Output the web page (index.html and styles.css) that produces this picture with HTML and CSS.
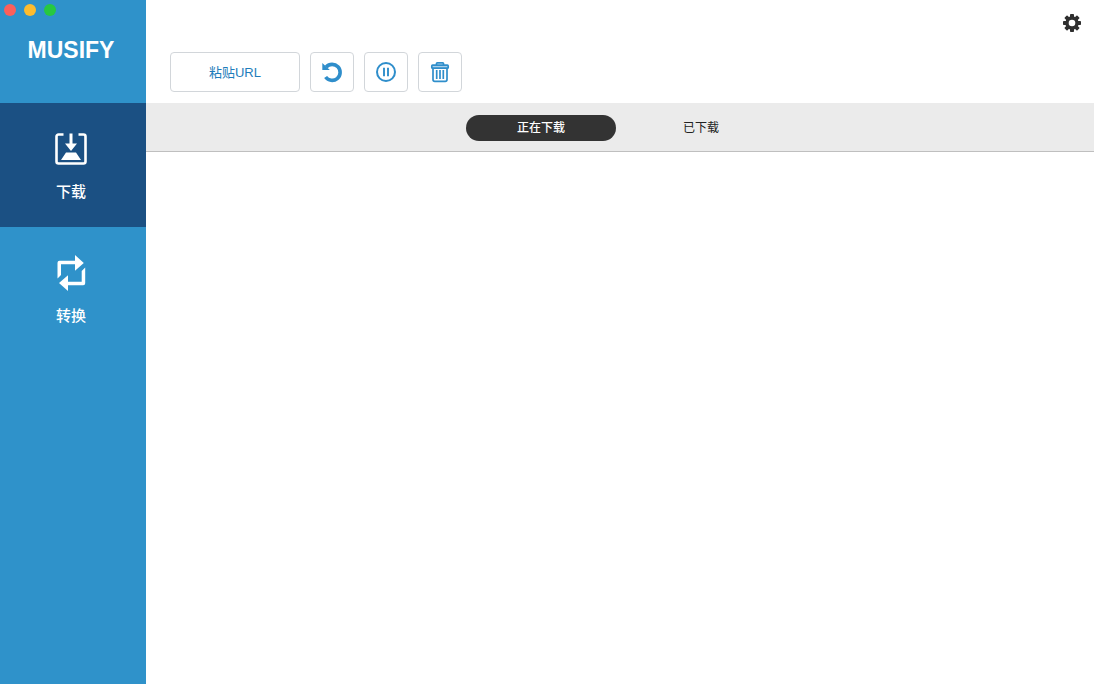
FILE: index.html
```html
<!DOCTYPE html>
<html lang="zh-CN">
<head>
  <meta charset="utf-8">
  <meta name="viewport" content="width=device-width, initial-scale=1">
  <title>MUSIFY</title>
  <link rel="stylesheet" href="styles.css">
</head>
<body>
  <div class="app">
    <aside class="sidebar">
      <header class="brand">
        <div class="window-controls">
          <button class="dot dot-close" type="button" aria-label="关闭"></button>
          <button class="dot dot-minimize" type="button" aria-label="最小化"></button>
          <button class="dot dot-zoom" type="button" aria-label="缩放"></button>
        </div>
        <h1 class="logo">MUSIFY</h1>
      </header>
      <nav class="nav">
        <a class="nav-item nav-item-active" href="#download">
          <svg class="nav-icon" viewBox="0 0 36 36" aria-hidden="true">
            <path d="M10.500 3.500H5.500a2 2 0 0 0-2 2v25a2 2 0 0 0 2 2h25a2 2 0 0 0 2-2v-25a2 2 0 0 0-2-2H25.500" fill="none" stroke="currentColor" stroke-width="2.6"/>
            <path d="M16.500 2.500h3V12.500h4.500l-6 7.500-6-7.500h4.500zM13 21.500h10l5 7.500h-20z" fill="currentColor"/>
          </svg>
          <span>下载</span>
        </a>
        <a class="nav-item" href="#convert">
          <svg class="nav-icon" viewBox="0 0 36 36" aria-hidden="true">
            <path d="M4.500 23.500V7.700q0-2 2-2H22V0l8.800 8-8.800 7.800V9.300H8V20z" fill="currentColor"/>
            <path d="M32.200 12.500v15.800q0 2-2 2H15v5.700L6 28l9-7.800v6.500h13.700V16z" fill="currentColor"/>
          </svg>
          <span>转换</span>
        </a>
      </nav>
    </aside>

    <main class="main">
      <header class="topbar">
        <div class="toolbar">
          <button class="btn btn-paste" type="button">粘贴URL</button>
          <button class="btn btn-icon" type="button" aria-label="重新开始">
            <svg class="tool-icon" viewBox="0 0 22 22" aria-hidden="true">
              <path d="M5.200 6A8 8 0 1 1 4.600 16" fill="none" stroke="currentColor" stroke-width="3.600"/>
              <path d="M1.300 2v7H8.800z" fill="currentColor"/>
            </svg>
          </button>
          <button class="btn btn-icon" type="button" aria-label="暂停">
            <svg class="tool-icon" viewBox="0 0 22 22" aria-hidden="true">
              <circle cx="11" cy="11" r="9" fill="none" stroke="currentColor" stroke-width="2"/>
              <path d="M9 6.800v8.400M13 6.800v8.400" stroke="currentColor" stroke-width="1.900"/>
            </svg>
          </button>
          <button class="btn btn-icon" type="button" aria-label="删除">
            <svg class="tool-icon" viewBox="0 0 22 22" aria-hidden="true">
              <g fill="none" stroke="currentColor" stroke-width="1.700">
                <path d="M7.500 4V2.500q0-.7.700-.7h5.600q.7 0 .7.700V4"/>
                <path d="M4 7v11.500q0 1.800 1.800 1.800h10.400q1.800 0 1.800-1.800V7"/>
                <path d="M7.700 9v9M11 9v9M14.300 9v9"/>
                <rect x="2.800" y="4.200" width="16.400" height="3" rx=".8" fill="#a9cfe9"/>
              </g>
            </svg>
          </button>
        </div>
        <button class="settings" type="button" aria-label="设置">
          <svg class="settings-icon" viewBox="0 0 20 20" aria-hidden="true">
            <g fill="currentColor">
              <rect x="8" y="1" width="4" height="18" rx=".8"/>
              <rect x="8" y="1" width="4" height="18" rx=".8" transform="rotate(45 10 10)"/>
              <rect x="8" y="1" width="4" height="18" rx=".8" transform="rotate(90 10 10)"/>
              <rect x="8" y="1" width="4" height="18" rx=".8" transform="rotate(135 10 10)"/>
              <circle cx="10" cy="10" r="6.700"/>
            </g>
            <circle cx="10" cy="10" r="3.300" fill="#fff"/>
          </svg>
        </button>
      </header>
      <div class="tabs" role="tablist">
        <button class="tab tab-active" type="button" role="tab" aria-selected="true">正在下载</button>
        <button class="tab" type="button" role="tab" aria-selected="false">已下载</button>
      </div>
      <section class="content" aria-label="正在下载"></section>
    </main>
  </div>
</body>
</html>
```
FILE: styles.css
```css
* {
  box-sizing: border-box;
}

body {
  margin: 0;
  font-family: "Liberation Sans", "Noto Sans CJK SC", sans-serif;
  color: #222;
  background: #fff;
}

button {
  font: inherit;
  color: inherit;
  padding: 0;
  border: 0;
  background: none;
  cursor: pointer;
}

svg {
  display: block;
}

.app {
  display: flex;
  min-height: 100vh;
}

.sidebar {
  flex: 0 0 146px;
  background: #2f92ca;
  color: #fff;
}

.brand {
  height: 103px;
  padding-top: 4px;
}

.window-controls {
  display: flex;
  gap: 8px;
  padding-left: 4px;
}

.dot {
  width: 12px;
  height: 12px;
  border-radius: 50%;
}

.dot-close {
  background: #fc605b;
}

.dot-minimize {
  background: #fdbc2e;
}

.dot-zoom {
  background: #27c840;
}

.logo {
  margin: 20px 4px 0 0;
  font-size: 23px;
  line-height: 28px;
  font-weight: 700;
  text-align: center;
}

.nav-item {
  display: flex;
  flex-direction: column;
  align-items: center;
  gap: 13px;
  height: 124px;
  padding: 28px 4px 0 0;
  font-size: 15px;
  line-height: 24px;
  font-weight: 500;
  color: #fff;
  text-decoration: none;
}

.nav-item-active {
  background: #1b5083;
}

.nav-icon {
  width: 36px;
  height: 36px;
}

.main {
  flex: 1;
  display: flex;
  flex-direction: column;
  min-width: 0;
}

.topbar {
  display: flex;
  justify-content: space-between;
  align-items: flex-start;
  height: 103px;
  padding: 13px 12px 11px 24px;
}

.toolbar {
  display: flex;
  align-self: flex-end;
  gap: 10px;
}

.btn {
  display: flex;
  align-items: center;
  justify-content: center;
  height: 40px;
  border: 1px solid #d2d6da;
  border-radius: 4px;
  background: #fff;
  color: #2f8ecb;
  font-size: 13px;
}

.btn-paste {
  width: 130px;
  padding-bottom: 2px;
  color: #1f7dbb;
}

.btn-icon {
  width: 44px;
}

.tool-icon {
  width: 22px;
  height: 22px;
}

.settings {
  color: #2f2f2f;
}

.settings-icon {
  width: 20px;
  height: 20px;
}

.tabs {
  display: flex;
  justify-content: center;
  align-items: center;
  gap: 10px;
  height: 49px;
  padding: 2px 0 0 2px;
  border-bottom: 1px solid #bfbfbf;
  background: #ebebeb;
}

.tab {
  width: 150px;
  height: 26px;
  padding-top: 1px;
  border-radius: 13px;
  font-size: 12px;
  line-height: 25px;
}

.tab-active {
  background: #333;
  color: #fff;
  font-weight: 500;
}

.content {
  flex: 1;
}
```
